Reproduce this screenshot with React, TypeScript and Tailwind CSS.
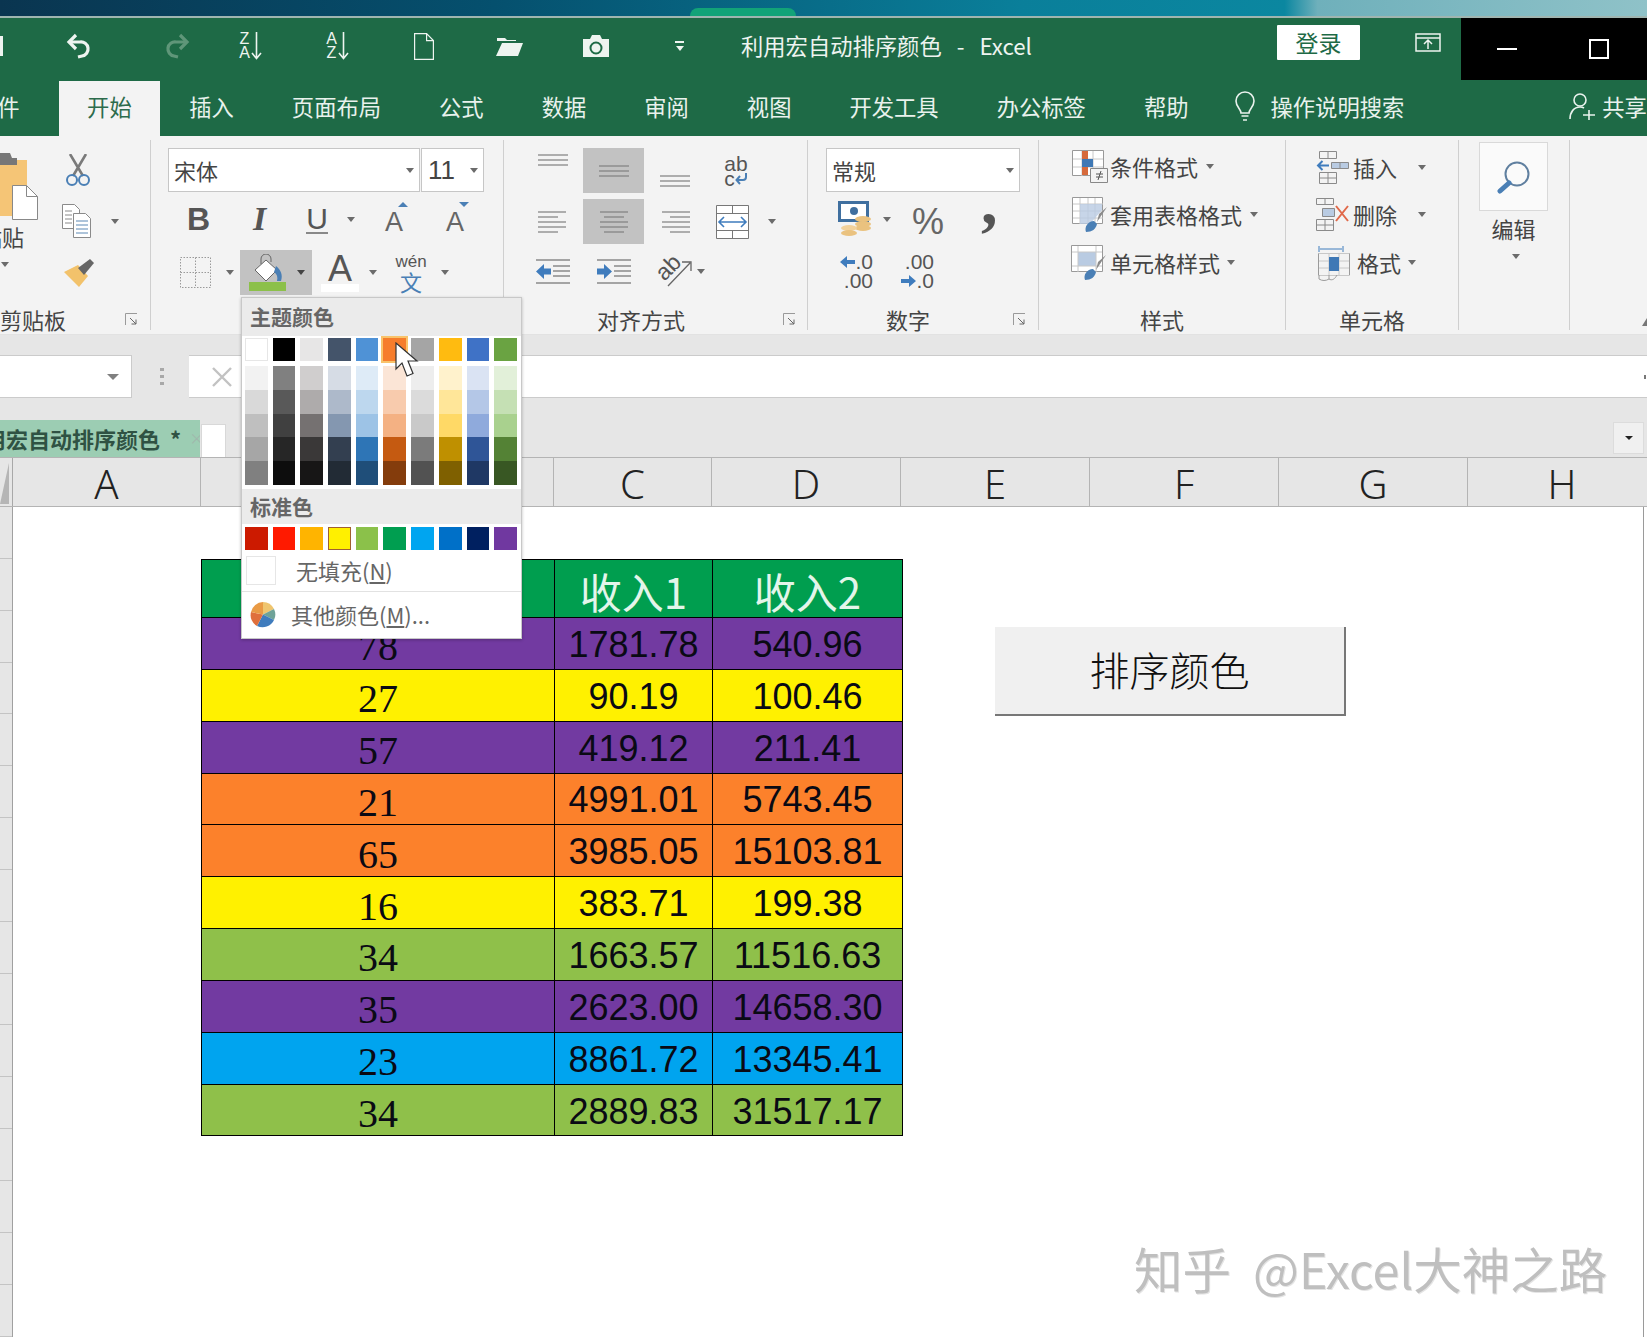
import type { ReactNode } from "react";

const THEME = [
  { base: "#ffffff", shades: ["#f2f2f2", "#d9d9d9", "#bfbfbf", "#a6a6a6", "#808080"] },
  { base: "#000000", shades: ["#808080", "#595959", "#404040", "#262626", "#0d0d0d"] },
  { base: "#e7e6e6", shades: ["#d0cece", "#aeabab", "#757171", "#3a3838", "#171616"] },
  { base: "#44546a", shades: ["#d6dce5", "#adb9ca", "#8497b0", "#333f50", "#222b35"] },
  { base: "#4f92d6", shades: ["#deebf7", "#bdd7ee", "#9dc3e6", "#2e75b6", "#1f4e79"] },
  { base: "#f67d2c", shades: ["#fbe5d6", "#f8cbad", "#f4b183", "#c55a11", "#843c0c"] },
  { base: "#a5a5a5", shades: ["#ededed", "#dbdbdb", "#c9c9c9", "#7b7b7b", "#525252"] },
  { base: "#ffbb10", shades: ["#fff2cc", "#ffe699", "#ffd966", "#bf9000", "#7f6000"] },
  { base: "#3f72c6", shades: ["#dae3f3", "#b4c7e7", "#8faadc", "#2f5597", "#1f3864"] },
  { base: "#6aa342", shades: ["#e2f0d9", "#c5e0b4", "#a9d18e", "#548235", "#385723"] },
];

const STANDARD = ["#cc1a00", "#ff1a00", "#ffb400", "#fff000", "#8bc14a", "#009e50", "#00a5f0", "#0070c8", "#002060", "#7038a0"];

const PURPLE = "bg-[#723aa1]";
const YELLOW = "bg-[#fff100]";
const ORANGE = "bg-[#fc812b]";
const GREEN = "bg-[#8fc04a]";
const BLUE = "bg-[#00a4ef]";

const ROWS = [
  { id: "78", a: "1781.78", b: "540.96", bg: PURPLE },
  { id: "27", a: "90.19", b: "100.46", bg: YELLOW },
  { id: "57", a: "419.12", b: "211.41", bg: PURPLE },
  { id: "21", a: "4991.01", b: "5743.45", bg: ORANGE },
  { id: "65", a: "3985.05", b: "15103.81", bg: ORANGE },
  { id: "16", a: "383.71", b: "199.38", bg: YELLOW },
  { id: "34", a: "1663.57", b: "11516.63", bg: GREEN },
  { id: "35", a: "2623.00", b: "14658.30", bg: PURPLE },
  { id: "23", a: "8861.72", b: "13345.41", bg: BLUE },
  { id: "34", a: "2889.83", b: "31517.17", bg: GREEN },
];

const TABS = ["插入", "页面布局", "公式", "数据", "审阅", "视图", "开发工具", "办公标签", "帮助"];

const COLUMNS = [
  { name: "A", w: "w-[188px]" },
  { name: "B", w: "w-[353px]" },
  { name: "C", w: "w-[158px]" },
  { name: "D", w: "w-[189px]" },
  { name: "E", w: "w-[189px]" },
  { name: "F", w: "w-[189px]" },
  { name: "G", w: "w-[189px]" },
  { name: "H", w: "w-[189px]" },
];

const Caret = ({ className = "" }: { className?: string }) => (
  <span className={`block w-0 h-0 shrink-0 border-x-[4.5px] border-x-transparent border-t-[5px] border-t-[#6b6b6b] ${className}`} />
);

// group label row along the bottom of the ribbon, launcher sits over its corner
const GroupLabel = ({ children, pad = "", launcher = "" }: { children?: ReactNode; pad?: string; launcher?: string }) => (
  <div className={`relative h-[30px] shrink-0 pt-[4px] text-center text-[22px] leading-[30px] whitespace-nowrap text-[#444] ${pad}`}>
    {children}
    {launcher && (
      <svg className={`absolute top-[13px] ${launcher}`} width="13" height="13" viewBox="0 0 13 13" fill="none">
        <path d="M12 .5H.5V12" stroke="#9a9a9a" />
        <path d="M5 5l6 6M11 6.5V11H6.5" stroke="#666" />
      </svg>
    )}
  </div>
);

const Undo = ({ color }: { color: string }) => (
  <svg width="26" height="27" viewBox="0 0 26 27" fill="none" stroke={color} strokeWidth="3.2">
    <path d="M10 2L3 9l7 7" />
    <path d="M3 9h11a7 7 0 0 1 2 14l-4 1" />
  </svg>
);

const SortIcon = ({ top, bottom }: { top: string; bottom: string }) => (
  <div className="flex items-center">
    <div className="flex flex-col items-center text-[16px] leading-[14px] text-[#eef4f0] font-['Liberation_Sans',sans-serif] w-[11px]">
      <span>{top}</span>
      <span>{bottom}</span>
    </div>
    <svg className="ml-[1px]" width="11" height="28" viewBox="0 0 11 28" fill="none" stroke="#eef4f0" strokeWidth="1.6">
      <path d="M5.5 0v26M1 21l4.5 5.5L10 21" />
    </svg>
  </div>
);

const LineSet = ({ rows, step }: { rows: [number, number][]; step: number }) => (
  <svg width="30" height={(rows.length - 1) * step + 2} fill="none" stroke="#7f7f7f" strokeWidth="1.2">
    {rows.map(([a, b], i) => (
      <path key={i} d={`M${a} ${i * step + 1}H${b}`} />
    ))}
  </svg>
);

const IndentIcon = ({ out }: { out: boolean }) => (
  <svg width="34" height="25" viewBox="0 0 34 25" fill="none">
    <path d="M0 1h34M0 24h34M17 7h17M17 12h17M17 17h17" stroke="#8a8a8a" strokeWidth="1.4" />
    {out ? (
      <path d="M0 12.5L8 5v4.5h7v6H8V20z" fill="#3f7cbd" />
    ) : (
      <path d="M15 12.5L7 5v4.5H0v6h7V20z" fill="#3f7cbd" />
    )}
  </svg>
);

const Brush = () => (
  <g>
    <path d="M27 17l8-7-10 15z" fill="#8a8a8a" />
    <path d="M14 35c-2-5 2-11 8-11l3 3c-1 5-5 8-11 8z" fill="#4a7fb5" />
  </g>
);

const ArrowBlue = ({ left }: { left: boolean }) => (
  <svg width="15" height="14" viewBox="0 0 15 14">
    {left ? <path d="M0 7l7-6v4h8v4H7v4z" fill="#3f7cbd" /> : <path d="M15 7L8 1v4H0v4h8v4z" fill="#3f7cbd" />}
  </svg>
);

const App = () => {
  return (
    <div className="relative w-[1647px] h-[1338px] overflow-hidden bg-white text-[#444] font-['Noto_Sans_CJK_SC','Liberation_Sans',sans-serif]">
      {/* wallpaper behind the window */}
      <div className="flex items-end h-[16px] pl-[690px] bg-[linear-gradient(90deg,#0a3550,#05506e_30%,#0a7f9a_62%,#0b87a0_78%,#6fb0bb_80%,#8fc2c8)]">
        <div className="w-[106px] h-[8px] rounded-t-[8px] bg-[#12a378]" />
      </div>
      <div className="h-[2px] bg-[#9fb5b0]" />

      {/* title bar */}
      <div className="flex h-[63px] bg-[#1e6a46]">
        <div className="flex items-center flex-1 pb-[7px] text-[#eef4f0]">
          <div className="w-[3px] h-[20px] bg-[#eef4f0]" />
          <div className="ml-[63px]"><Undo color="#eef4f0" /></div>
          <div className="ml-[72px] -scale-x-100"><Undo color="#5f9679" /></div>
          <div className="ml-[49px]"><SortIcon top="Z" bottom="A" /></div>
          <div className="ml-[64px]"><SortIcon top="A" bottom="Z" /></div>
          <svg className="ml-[65px]" width="20" height="27" viewBox="0 0 20 27" fill="none" stroke="#eef4f0" strokeWidth="1.2">
            <path d="M.6.6h12l6.8 7v18.8H.6zM12.6.6v7h6.8" />
          </svg>
          <svg className="ml-[62px]" width="27" height="22" viewBox="0 0 27 22">
            <path d="M1 6V3h8l2 2h9v1z" fill="#eef4f0" />
            <path d="M6 8h21l-5 13H0z" fill="#eef4f0" />
          </svg>
          <svg className="ml-[60px]" width="26" height="24" viewBox="0 0 26 24">
            <path d="M0 5h7l2-4h8l2 4h7v18H0z" fill="#eef4f0" />
            <circle cx="13" cy="14" r="5.5" fill="none" stroke="#1e6a46" strokeWidth="2" />
          </svg>
          <div className="ml-[66px] flex flex-col items-center gap-[3px]">
            <div className="w-[9px] h-[2px] bg-[#eef4f0]" />
            <span className="block w-0 h-0 border-x-[4.5px] border-x-transparent border-t-[5px] border-t-[#eef4f0]" />
          </div>
          <div className="ml-[57px] text-[22.3px] whitespace-pre">利用宏自动排序颜色   -   Excel</div>
          <div className="ml-[245px] -mt-[7px] w-[83px] h-[35px] bg-white rounded-[1px] flex items-center justify-center text-[23px] text-[#1e6a46]">登录</div>
          <svg className="ml-[55px] -mt-[7px]" width="26" height="19" viewBox="0 0 26 19" fill="none" stroke="#eef4f0" strokeWidth="1.5">
            <path d="M1 1h24v17H1zM1 5h24M13 16V8M9 11l4-4 4 4" />
          </svg>
        </div>
        <div className="flex w-[186px] h-[62px] bg-black items-center">
          <div className="ml-[36px] w-[20px] h-[2px] bg-white" />
          <div className="ml-[72px] w-[20px] h-[20px] border-2 border-white" />
        </div>
      </div>

      {/* tabs */}
      <div className="flex items-center h-[55px] bg-[#1e6a46] text-[22.3px] text-[#e9f2ed] whitespace-nowrap -ml-[54px]">
        <div className="px-[29px] mr-[10px] pb-[4px]">文件</div>
        <div className="px-[28.5px] pb-[4px] h-full flex items-center bg-[#f3f3f3] text-[#2c6b4c]">开始</div>
        {TABS.map((t) => (
          <div key={t} className="px-[29px] pb-[4px] shrink-0">{t}</div>
        ))}
        <svg className="ml-[18px] -mt-[4px] shrink-0" width="20" height="31" viewBox="0 0 20 31" fill="none" stroke="#e9f2ed" strokeWidth="1.6">
          <path d="M6 22c0-4-5-6-5-12a9 9 0 0 1 18 0c0 6-5 8-5 12zM6.5 25h7M8 29h4" />
        </svg>
        <div className="ml-[15px] pb-[4px] shrink-0">操作说明搜索</div>
        <svg className="ml-[165px] -mt-[4px] shrink-0" width="27" height="28" viewBox="0 0 27 28" fill="none" stroke="#e9f2ed" strokeWidth="1.6">
          <circle cx="11" cy="7" r="6" />
          <path d="M1 26c0-7 4-12 10-12 2 0 3 .3 4 1M20 17v10M14 22h12" />
        </svg>
        <div className="ml-[6px] pb-[4px] shrink-0">共享</div>
      </div>

      {/* ribbon */}
      <div className="flex h-[199px] bg-[#f3f3f3] border-b border-[#e2e2e2]">
        {/* clipboard */}
        <div className="flex flex-col w-[151px] shrink-0 my-[4px] border-r border-[#cfcfcf]">
          <div className="flex flex-1 overflow-hidden">
            <div className="flex flex-col w-[60px] shrink-0 pt-[12px]">
              <svg width="40" height="68" viewBox="0 0 40 68">
                <path d="M0 8h27v56H0z" fill="#f5c576" />
                <path d="M0 1h10l2 5h5v7H0z" fill="#777" />
                <path d="M12.5 33.5h14l11 11v23h-25z" fill="#fff" stroke="#888" />
                <path d="M26.5 33.5v11h11" fill="none" stroke="#888" />
              </svg>
              <div className="-ml-[20px] text-[22px] leading-[32px] whitespace-nowrap">粘贴</div>
              <Caret className="mt-[10px] ml-[1px]" />
            </div>
            <div className="flex flex-col pt-[14px]">
              <svg className="ml-[4px]" width="28" height="33" viewBox="0 0 28 33" fill="none">
                <path d="M6 0l13 22M22 0L9 22" stroke="#7a7a7a" strokeWidth="2.6" />
                <circle cx="8" cy="26" r="5" stroke="#4a7fb5" strokeWidth="2" />
                <circle cx="20" cy="26" r="5" stroke="#4a7fb5" strokeWidth="2" />
              </svg>
              <div className="flex items-center mt-[17px]">
                <svg className="ml-[2px]" width="29" height="34" viewBox="0 0 29 34" fill="#fff" stroke="#8a8a8a" strokeWidth="1">
                  <path d="M.5.5h12l5 5v19H.5z" />
                  <path d="M11.5 9.5h12l5 5v19h-17z" />
                  <path d="M3 7h7M3 11h7M3 15h7M3 19h7" />
                  <path d="M14 17h12M14 21h12M14 25h12M14 29h12" stroke="#5d89b5" />
                </svg>
                <Caret className="ml-[20px]" />
              </div>
              <svg className="mt-[21px] ml-[4px]" width="30" height="28" viewBox="0 0 30 28">
                <path d="M0 13l14-7 10 11-9 11z" fill="#f2c26b" />
                <path d="M14 9L26 0l4 4-10 12z" fill="#666" />
              </svg>
            </div>
          </div>
          <GroupLabel pad="pr-[94px]" launcher="left-[125px]">剪贴板</GroupLabel>
        </div>

        {/* font */}
        <div className="flex flex-col w-[353px] shrink-0 my-[4px] border-r border-[#cfcfcf] pl-[17px]">
          <div className="flex-1 pt-[8px]">
            <div className="flex gap-[1px] h-[44px] w-[316px]">
              <div className="flex items-center justify-between w-[252px] pl-[5px] pr-[5px] bg-white border border-[#c6c6c6]">
                <span className="text-[22px]">宋体</span>
                <Caret />
              </div>
              <div className="flex items-center justify-between w-[63px] pl-[6px] pr-[5px] bg-white border border-[#c6c6c6]">
                <span className="text-[26px] font-['Liberation_Sans',sans-serif] font-light">11</span>
                <Caret />
              </div>
            </div>
            <div className="flex items-center h-[40px] mt-[7px] font-['Liberation_Sans',sans-serif] text-[#555]">
              <span className="ml-[19px] w-[23px] text-[32px] font-bold leading-none">B</span>
              <span className="ml-[43px] w-[18px] text-[34px] font-bold italic leading-none font-['Liberation_Serif',serif]">I</span>
              <span className="ml-[35px] w-[22px] text-[30px] leading-[27px] border-b-2 border-[#888] text-center">U</span>
              <Caret className="ml-[19px]" />
              <span className="relative ml-[30px] mt-[7px] w-[19px] text-[27px] leading-none text-[#666]">
                A
                <span className="absolute -top-[7px] left-[13px] block w-0 h-0 border-x-[5px] border-x-transparent border-b-[5px] border-b-[#4a7fb5]" />
              </span>
              <span className="relative ml-[42px] mt-[7px] w-[19px] text-[27px] leading-none text-[#666]">
                A
                <span className="absolute -top-[7px] left-[13px] block w-0 h-0 border-x-[5px] border-x-transparent border-t-[5px] border-t-[#4a7fb5]" />
              </span>
            </div>
            <div className="flex items-center h-[45px] mt-[11px]">
              <svg className="ml-[12px]" width="31" height="31" viewBox="0 0 31 31" fill="none" stroke="#9a9a9a" strokeDasharray="1.5 1.5">
                <path d="M.5.5h30v30H.5zM15.5.5v30M.5 15.5h30" />
              </svg>
              <Caret className="ml-[15px]" />
              <div className="flex items-center ml-[6px] w-[72px] h-[45px] bg-[#c2c2c2]">
                <svg className="ml-[9px]" width="38" height="38" viewBox="0 0 38 38">
                  <path d="M6 16L17 6l11 10-11 11z" fill="#fff" stroke="#666" />
                  <path d="M12 10V5a5 5 0 0 1 10 0v3" fill="none" stroke="#666" />
                  <path d="M27 12c5 4 7 9 5 15h-4c1-4 0-7-3-9z" fill="#4a7fb5" />
                  <path d="M0 28h37v9H0z" fill="#8cc04a" />
                </svg>
                <Caret className="ml-[10px] !border-t-[#444]" />
              </div>
              <div className="ml-[9px] flex flex-col items-center w-[38px]">
                <span className="text-[36px] leading-[30px] font-['Liberation_Sans',sans-serif] text-[#555]">A</span>
                <div className="w-[38px] h-[8px] bg-white" />
              </div>
              <Caret className="ml-[10px]" />
              <div className="ml-[18px] flex flex-col items-center w-[32px]">
                <span className="text-[17px] leading-[17px] font-['Liberation_Sans',sans-serif] text-[#555]">wén</span>
                <span className="text-[22px] leading-[22px] text-[#4a7fb5]">文</span>
              </div>
              <Caret className="ml-[14px]" />
            </div>
          </div>
          <GroupLabel />
        </div>

        {/* alignment */}
        <div className="flex flex-col w-[304px] shrink-0 my-[4px] border-r border-[#cfcfcf]">
          <div className="flex-1 pt-[8px]">
            <div className="flex h-[45px]">
              <div className="ml-[20px] w-[59px] flex justify-center pt-[6px] pr-[2px]">
                <LineSet rows={[[0, 30], [0, 30], [0, 30]]} step={5} />
              </div>
              <div className="w-[61px] flex items-center justify-center bg-[#c2c2c2]">
                <LineSet rows={[[0, 30], [0, 30], [0, 30]]} step={5} />
              </div>
              <div className="w-[62px] flex items-end justify-center pb-[6px]">
                <LineSet rows={[[0, 30], [0, 30], [0, 30]]} step={5} />
              </div>
              <div className="ml-[17px] flex flex-col items-center mt-[8px] w-[26px] font-['Liberation_Sans',sans-serif] text-[#555] text-[21px] leading-[15px]">
                <span>ab</span>
                <span className="flex items-center">
                  c
                  <svg width="13" height="12" viewBox="0 0 13 12" fill="none" stroke="#4a7fb5" strokeWidth="2">
                    <path d="M11 0v4a3 3 0 0 1-3 3H2M5 3L1.500 7 5 11" />
                  </svg>
                </span>
              </div>
            </div>
            <div className="flex h-[45px] mt-[6px]">
              <div className="ml-[20px] w-[59px] flex items-center justify-center pr-[2px]">
                <LineSet rows={[[0, 28], [0, 20], [0, 28], [0, 28], [0, 20]]} step={5} />
              </div>
              <div className="w-[61px] flex items-center justify-center bg-[#c2c2c2]">
                <LineSet rows={[[1, 29], [5, 25], [1, 29], [1, 29], [5, 25]]} step={5} />
              </div>
              <div className="w-[62px] flex items-center justify-center">
                <LineSet rows={[[2, 30], [10, 30], [2, 30], [2, 30], [10, 30]]} step={5} />
              </div>
              <svg className="ml-[10px] mt-[6px]" width="34" height="34" viewBox="0 0 34 34" fill="#fff" stroke="#777">
                <path d="M.5.500h32v33H.5zM.5 8.500h32M.5 25.500h32M16.500.5v8M16.500 25.500v8" />
                <path d="M3 17h27M8 12l-5 5 5 5M25 12l5 5-5 5" fill="none" stroke="#3f7cbd" strokeWidth="1.6" />
              </svg>
              <Caret className="ml-[18px] mt-[20px]" />
            </div>
            <div className="flex items-center h-[30px] mt-[12px]">
              <div className="ml-[32px]"><IndentIcon out /></div>
              <div className="ml-[27px]"><IndentIcon out={false} /></div>
              <div className="relative ml-[24px] w-[37px] h-[34px]">
                <span className="absolute left-[0px] top-[2px] rotate-[-45deg] text-[23px] leading-[22px] font-['Liberation_Sans',sans-serif] text-[#555]">ab</span>
                <svg className="absolute left-[5px] top-[1px]" width="32" height="32" viewBox="0 0 32 32" fill="none" stroke="#666" strokeWidth="1.300">
                  <path d="M8 31L30 8M22 7h9v9" />
                </svg>
              </div>
              <Caret className="ml-[5px]" />
            </div>
          </div>
          <GroupLabel pad="pr-[29px]" launcher="left-[279px]">对齐方式</GroupLabel>
        </div>

        {/* number */}
        <div className="flex flex-col w-[231px] shrink-0 my-[4px] border-r border-[#cfcfcf]">
          <div className="flex-1 pt-[8px]">
            <div className="flex items-center justify-between ml-[18px] w-[194px] h-[44px] pl-[5px] pr-[5px] bg-white border border-[#c6c6c6]">
              <span className="text-[22px]">常规</span>
              <Caret />
            </div>
            <div className="flex items-center h-[40px] mt-[7px]">
              <svg className="ml-[30px]" width="33" height="36" viewBox="0 0 33 36">
                <path d="M0 0h31v21H0z" fill="#3f6f9f" />
                <path d="M3 3h25v15H3z" fill="#fff" />
                <circle cx="16" cy="10" r="4" fill="#3f6f9f" />
                <ellipse cx="25" cy="18" rx="8" ry="3" fill="#eac27f" />
                <ellipse cx="25" cy="23" rx="8" ry="3" fill="#eac27f" />
                <ellipse cx="25" cy="27" rx="8" ry="3" fill="#eac27f" />
                <ellipse cx="11" cy="27" rx="8" ry="3" fill="#f2d19a" />
                <ellipse cx="11" cy="32" rx="8" ry="3" fill="#eac27f" />
              </svg>
              <Caret className="ml-[12px]" />
              <span className="ml-[21px] mt-[6px] w-[31px] text-[36px] leading-none font-['Liberation_Sans',sans-serif] font-light text-[#666]">%</span>
              <span className="ml-[38px] text-[66px] leading-[40px] -translate-y-[17px] font-bold font-['Liberation_Serif',serif] text-[#555]">,</span>
            </div>
            <div className="flex mt-[14px] font-['Liberation_Sans',sans-serif] text-[21px] leading-[18.5px] text-[#555]">
              <div className="ml-[31px] w-[34px] flex flex-col items-end">
                <span className="flex items-center"><ArrowBlue left />.0</span>
                <span>.00</span>
              </div>
              <div className="ml-[27px] w-[34px] flex flex-col items-end">
                <span>.00</span>
                <span className="flex items-center"><ArrowBlue left={false} />.0</span>
              </div>
            </div>
          </div>
          <GroupLabel pad="pr-[30px]" launcher="left-[205px]">数字</GroupLabel>
        </div>

        {/* styles */}
        <div className="flex flex-col w-[247px] shrink-0 my-[4px] border-r border-[#cfcfcf]">
          <div className="flex-1 pt-[3px] text-[22px]">
            <div className="flex items-center h-[47px] ml-[33px]">
              <svg width="36" height="33" viewBox="0 0 36 33" fill="none">
                <path d="M.5.500h31v25H.5z" fill="#fff" stroke="#999" />
                <path d="M10 1v25M21 1v25M1 9h30M1 17h30" stroke="#c8c8c8" />
                <path d="M10 1h6v8h-6zM10 17h6v8h-6z" fill="#d66a3c" />
                <path d="M10 9h11v8H10z" fill="#3f78b5" />
                <path d="M18.500 18.500h17v14h-17z" fill="#f3f3f3" stroke="#888" />
                <path d="M24 24h7M24 27h7M29 21l-3 9" stroke="#555" />
              </svg>
              <span className="ml-[2px]">条件格式</span>
              <Caret className="ml-[8px]" />
            </div>
            <div className="flex items-center h-[47px] mt-[1px] ml-[33px]">
              <svg width="36" height="36" viewBox="0 0 36 36" fill="none">
                <path d="M.5.500h30v26H.5z" fill="#fff" stroke="#999" />
                <path d="M8 1v26M16 1v26M23 1v26M1 7h30M1 14h30M1 21h30" stroke="#c8c8c8" />
                <path d="M30 1v12L18 27H8V7h22z" fill="#b9cbe2" opacity=".8" />
                <Brush />
              </svg>
              <span className="ml-[2px]">套用表格格式</span>
              <Caret className="ml-[8px]" />
            </div>
            <div className="flex items-center h-[47px] mt-[1px] ml-[32px]">
              <svg width="37" height="36" viewBox="0 0 37 36" fill="none">
                <path d="M.5.500h31v26H.5z" fill="#fff" stroke="#999" />
                <path d="M7 7h18v14H7z" fill="#b9cbe2" />
                <path d="M1 7h30M1 21h30M7 1v26M25 1v26" stroke="#c8c8c8" />
                <Brush />
              </svg>
              <span className="ml-[2px]">单元格样式</span>
              <Caret className="ml-[7px]" />
            </div>
          </div>
          <GroupLabel>样式</GroupLabel>
        </div>

        {/* cells */}
        <div className="flex flex-col w-[173px] shrink-0 my-[4px] border-r border-[#cfcfcf]">
          <div className="flex-1 pt-[4px] text-[22px]">
            <div className="flex items-center h-[47px] ml-[30px]">
              <svg width="33" height="33" viewBox="0 0 33 33" fill="none" stroke="#8a8a8a">
                <path d="M3.500.500h17v7h-17zM12 .5v7M3.500 21.500h17v11h-17zM12 21.500v11M3.500 27h17" />
                <path d="M15.500 11.500h17v6h-17zM24 11.500v6" fill="#b9cbe2" />
                <path d="M13 14.500H2M6.500 10l-4.500 4.500L6.500 19" stroke="#3f7cbd" strokeWidth="2" />
              </svg>
              <span className="ml-[4px]">插入</span>
              <Caret className="ml-[21px]" />
            </div>
            <div className="flex items-center h-[47px] ml-[30px]">
              <svg width="33" height="33" viewBox="0 0 33 33" fill="none" stroke="#8a8a8a">
                <path d="M.5.500h17v6H.5zM9 .5v6M.5 21.500h17v11H.5zM9 21.500v11M.5 27h17" />
                <path d="M6.500 10.500h12v8h-12z" fill="#b9cbe2" />
                <path d="M20 8l12 15M32 8L20 23" stroke="#e0694a" strokeWidth="2" />
              </svg>
              <span className="ml-[4px]">删除</span>
              <Caret className="ml-[21px]" />
            </div>
            <div className="flex items-center h-[47px] mt-[1px] ml-[32px]">
              <svg width="32" height="36" viewBox="0 0 32 36" fill="none" stroke="#9a9a9a">
                <path d="M1 1v6M25 1v6M2 4h22" stroke="#3f7cbd" />
                <path d="M.5 8.500h31v22H.5zM11 9v21M21 9v21M1 16h30M1 23h30" stroke="#c8c8c8" />
                <path d="M.5 8.500V30M31.500 8.500V30" />
                <path d="M11 12h10v14H11z" fill="#3f78b5" stroke="none" />
                <path d="M1 30v4c3 2 7 2 10 0v-4M11 34c3 2 6 0 8-4" />
              </svg>
              <span className="ml-[7px]">格式</span>
              <Caret className="ml-[7px]" />
            </div>
          </div>
          <GroupLabel>单元格</GroupLabel>
        </div>

        {/* editing */}
        <div className="flex flex-col w-[111px] shrink-0 my-[4px] border-r border-[#cfcfcf]">
          <div className="flex-1 pt-[2px]">
            <div className="flex items-center justify-center ml-[20px] w-[69px] h-[69px] bg-[#fafafa] border border-[#d9d9d9]">
              <svg width="34" height="34" viewBox="0 0 34 34" fill="none">
                <circle cx="20" cy="14" r="11.500" stroke="#5f7f9f" strokeWidth="2" />
                <path d="M12 23L3 31" stroke="#4a7fb5" strokeWidth="5" strokeLinecap="round" />
              </svg>
            </div>
            <div className="mt-[2px] ml-[20px] w-[69px] text-center text-[22px] leading-[30px]">编辑</div>
            <Caret className="ml-[53px] mt-[11px]" />
          </div>
        </div>
        <div className="flex-1 flex items-end justify-end pb-[8px]">
          <span className="block w-[5px] h-[8px] bg-[#777] [clip-path:polygon(100%_0,100%_100%,0_100%)]" />
        </div>
      </div>

      {/* band under the ribbon, formula bar and sheet tabs */}
      <div className="bg-[#e6e6e6]">
        <div className="h-[20px]" />
        <div className="flex h-[43px]">
          <div className="flex items-center justify-end w-[132px] pr-[12px] bg-white border-y border-r border-[#cbcbcb]">
            <span className="block w-0 h-0 border-x-[6px] border-x-transparent border-t-[6px] border-t-[#808080]" />
          </div>
          <div className="flex flex-col gap-[4px] justify-center ml-[28px] w-[4px]">
            <div className="h-[3px] bg-[#a8a8a8]" />
            <div className="h-[3px] bg-[#a8a8a8]" />
            <div className="h-[3px] bg-[#a8a8a8]" />
          </div>
          <div className="flex items-center justify-between flex-1 ml-[25px] pl-[23px] pr-[1px] bg-white border-y border-[#cbcbcb]">
            <svg width="20" height="20" viewBox="0 0 20 20" fill="none" stroke="#c2c2c2" strokeWidth="2.400">
              <path d="M1 1l18 18M19 1L1 19" />
            </svg>
            <span className="w-[2px] h-[4px] bg-[#777]" />
          </div>
        </div>
        <div className="h-[22px]" />
        <div className="flex h-[37px]">
          <div className="flex items-center w-[200px] overflow-hidden bg-[#9ccdb3] whitespace-nowrap">
            <span className="-ml-[38px] text-[22px] font-bold text-[#2f5243] whitespace-pre">利用宏自动排序颜色  *</span>
            <span className="ml-[8px] text-[15px] text-[#a0b8ac]">×</span>
          </div>
          <div className="ml-[1px] mt-[4px] w-[25px] bg-white border border-[#d8d8d8] border-b-0" />
          <div className="flex items-center justify-center ml-auto mr-[3px] mt-[2px] w-[31px] h-[32px] bg-[#f0f0f0] border border-[#dcdcdc]">
            <span className="block w-0 h-0 border-x-[4px] border-x-transparent border-t-[4px] border-t-[#222]" />
          </div>
        </div>
        <div className="flex h-[50px] border-y border-[#b4b4b4] text-[40px] font-light text-[#222] font-['Noto_Sans',sans-serif]">
          <div className="w-[13px] shrink-0 border-r border-[#a8a8a8] pt-[5px]">
            <span className="block w-[9px] h-[41px] bg-[#b5b5b5] [clip-path:polygon(100%_0,100%_100%,0_100%)]" />
          </div>
          {COLUMNS.map((c) => (
            <div key={c.name} className={`${c.w} shrink-0 flex items-center justify-center pt-[3px] border-r border-[#b4b4b4] leading-none`}>
              {c.name}
            </div>
          ))}
        </div>
      </div>

      {/* sheet */}
      <div className="flex">
        <div className="w-[13px] shrink-0 bg-[#e6e6e6] border-r border-[#a0a0a0]">
          {Array.from({ length: 16 }).map((_, i) => (
            <div key={i} className="h-[51.85px] border-b border-[#c4c4c4]" />
          ))}
        </div>
        <div className="flex-1 pl-[188px] pt-[52px]">
          <table className="table-fixed border-collapse w-[701px]">
            <colgroup>
              <col className="w-[353px]" />
              <col className="w-[158px]" />
              <col className="w-[190px]" />
            </colgroup>
            <thead>
              <tr className="h-[58px] bg-[#009e4f] text-[#e3f5ea] text-[42px] leading-[50px]">
                <th className="border border-black p-0" />
                <th className="border border-black p-0 pt-[4px] font-normal">收入1</th>
                <th className="border border-black p-0 pt-[4px] font-normal">收入2</th>
              </tr>
            </thead>
            <tbody className="font-['Liberation_Sans',sans-serif] text-[36px] text-[#0a0a14]">
              {ROWS.map((r, i) => (
                <tr key={i} className={`h-[51.85px] ${r.bg}`}>
                  <td className="border border-black p-0 pt-[8px] text-center font-['Liberation_Serif',serif] text-[40px] leading-[40px]">{r.id}</td>
                  <td className="border border-black p-0 pt-[3px] text-center leading-[40px]">{r.a}</td>
                  <td className="border border-black p-0 pt-[3px] text-center leading-[40px]">{r.b}</td>
                </tr>
              ))}
            </tbody>
          </table>
        </div>
        <div className="w-[1px] bg-[#9a9a9a] mr-[3px] shrink-0" />
      </div>

      {/* macro button on the sheet */}
      <div className="absolute left-[995px] top-[627px] flex items-center justify-center w-[351px] h-[89px] bg-[#f0f0f0] border-r-2 border-b-2 border-[#777] text-[40px] font-light text-[#111] pb-[3px]">
        排序颜色
      </div>

      {/* watermark */}
      <div className="absolute left-[1134px] top-[1233px] text-[48.5px] leading-[70px] whitespace-nowrap text-[#bfbfbf] [text-shadow:1px_1px_0_#e4e4e4]">
        知乎<span className="ml-[22px]">@Excel大神之路</span>
      </div>

      {/* fill colour dropdown */}
      <div className="absolute left-[241px] top-[297px] w-[281px] h-[342px] bg-white border border-[#c8c8c8] shadow-[0_1px_3px_rgba(0,0,0,0.25)]">
        <div className="h-[38px] pl-[8px] bg-[#ebebeb] text-[21px] leading-[37px] font-bold text-[#666]">主题颜色</div>
        <div className="flex gap-[5px] ml-[3px] mt-[2px]">
          {THEME.map((c) => (
            <div
              key={c.base}
              className={`w-[22.700px] h-[23px] ${c.base === "#f67d2c" ? "outline-2 outline-[#f9c36a]" : ""} ${c.base === "#ffffff" ? "border border-[#e6e6e6]" : ""}`}
              style={{ background: c.base }}
            />
          ))}
        </div>
        <div className="flex gap-[5px] ml-[3px] mt-[5px]">
          {THEME.map((c) => (
            <div key={c.base} className="w-[22.700px]">
              {c.shades.map((s) => (
                <div key={s} className="h-[23.800px]" style={{ background: s }} />
              ))}
            </div>
          ))}
        </div>
        <div className="h-[35px] mt-[4px] pl-[8px] bg-[#ebebeb] text-[21px] leading-[35px] font-bold text-[#666]">标准色</div>
        <div className="flex gap-[5px] ml-[3px] mt-[3px]">
          {STANDARD.map((c) => (
            <div
              key={c}
              className={`w-[22.700px] h-[23px] ${c === "#fff000" ? "border border-[#a06030]" : ""}`}
              style={{ background: c }}
            />
          ))}
        </div>
        <div className="flex items-center h-[42px] border-b border-[#e2e2e2]">
          <div className="ml-[4px] w-[30px] h-[29px] bg-white border border-[#e6e6e6]" />
          <span className="ml-[20px] text-[22px] text-[#666]">无填充(<span className="underline">N</span>)</span>
        </div>
        <div className="flex items-center h-[45px]">
          <svg className="ml-[8px]" width="26" height="27" viewBox="0 0 26 27">
            <path d="M13 13.500V1a12.500 12.500 0 0 1 11 7z" fill="#efc56f" />
            <path d="M13 13.500L24 8a12.500 12.500 0 0 1 0 11z" fill="#6fa398" />
            <path d="M13 13.500L24 19a12.500 12.500 0 0 1-17 6z" fill="#3f7cbd" />
            <path d="M13 13.500L7 25A12.500 12.500 0 0 1 1 11z" fill="#df6f3c" />
            <path d="M13 13.500L1 11A12.500 12.500 0 0 1 13 1z" fill="#e99a45" />
          </svg>
          <span className="ml-[15px] text-[22px] text-[#666] whitespace-nowrap">其他颜色(<span className="underline">M</span>)...</span>
        </div>
      </div>

      {/* mouse pointer */}
      <svg className="absolute left-[395px] top-[342px]" width="25" height="37" viewBox="0 0 25 37">
        <path d="M1 1v26l6-6 5 13 6-2.500-5-12.500h9z" fill="#fff" stroke="#333" strokeWidth="1.200" />
      </svg>
    </div>
  );
};

export default App;
